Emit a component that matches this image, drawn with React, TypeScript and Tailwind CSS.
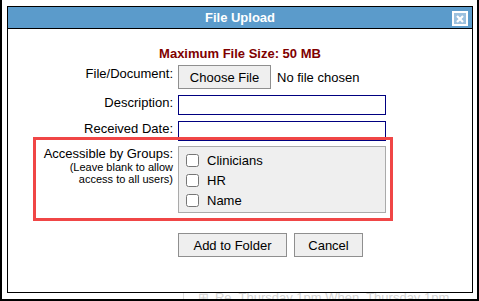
import React from "react";

const font = { fontFamily: '"Liberation Sans", Arial, sans-serif' };

const groups = ["Clinicians", "HR", "Name"];

const App = (): React.JSX.Element => {
  return (
    <div
      className="relative w-[479px] h-[301px] bg-white border-l-2 border-r-2 border-b-2 border-black pl-[5px] pt-[6px] flex flex-col overflow-hidden"
      style={font}
    >
      {/* dialog */}
      <div className="w-[466px] h-[287px] shrink-0 border border-black bg-white flex flex-col">
        <div className="relative h-[22px] shrink-0 bg-[#5b9bcb] border-b border-black flex items-center justify-center">
          <span className="text-white font-bold text-[13px] leading-[15px]">File Upload</span>
          <div className="absolute top-[4px] right-[4px] w-[16px] h-[15px] border-2 border-white bg-[#9cc1df] flex items-center justify-center">
            <svg width="8" height="8" viewBox="0 0 8 8">
              <path d="M1 1L7 7M7 1L1 7" stroke="#fff" strokeWidth="2.2" />
            </svg>
          </div>
        </div>

        <div className="flex flex-col pt-[17px] text-[13px] leading-[15px] text-black">
          <div className="text-center font-bold text-[#800000]">Maximum File Size: 50 MB</div>

          <div className="flex items-start mt-[4px]">
            <div className="w-[165px] text-right pt-[1px]">File/Document:</div>
            <div className="ml-[5px] flex items-center">
              <button className="w-[93px] h-[24px] bg-[#efefef] border border-[#8f8f8f] text-[13px]">
                Choose File
              </button>
              <span className="ml-[6px]">No file chosen</span>
            </div>
          </div>

          <div className="flex items-start mt-[6px]">
            <div className="w-[165px] text-right">Description:</div>
            <input className="ml-[5px] w-[208px] h-[20px] border border-[#000080] outline-none" />
          </div>

          <div className="flex items-start mt-[6px]">
            <div className="w-[165px] text-right">Received Date:</div>
            <input className="ml-[5px] w-[208px] h-[20px] border border-[#000080] outline-none" />
          </div>

          <div className="flex items-start mt-[5px]">
            <div className="w-[165px] text-right">
              <div>Accessible by Groups:</div>
              <div className="text-[11px] leading-[12px]">(Leave blank to allow</div>
              <div className="text-[11px] leading-[12px]">access to all users)</div>
            </div>
            <div className="ml-[5px] w-[208px] h-[67px] border border-[#aaaaaa] bg-[#efefef] pt-[3px] pl-[7px]">
              {groups.map((g) => (
                <label key={g} className="h-[20px] flex items-center">
                  <input type="checkbox" className="m-0 w-[13px] h-[13px]" />
                  <span className="ml-[8px]">{g}</span>
                </label>
              ))}
            </div>
          </div>

          <div className="flex mt-[20px] ml-[170px] gap-[7px]">
            <button className="w-[109px] h-[24px] bg-[#efefef] border border-[#8f8f8f] text-[13px]">
              Add to Folder
            </button>
            <button className="w-[69px] h-[24px] bg-[#efefef] border border-[#8f8f8f] text-[13px]">
              Cancel
            </button>
          </div>
        </div>
      </div>

      {/* page behind the dialog */}
      <div className="h-[6px] overflow-hidden flex items-start pl-[176px] text-[13px] leading-[15px] text-[#d4d4d4]">
        <div className="w-px h-[6px] bg-[#dddddd]" />
        <span className="ml-[14px] -mt-[3px]">⊞</span>
        <span className="ml-[6px] -mt-[3px]">Re. Thursday 1pm When. Thursday 1pm Contact</span>
      </div>

      {/* annotation */}
      <div className="absolute left-[31px] top-[137px] w-[360px] h-[84px] border-[3px] border-[#f04646] pointer-events-none" />
    </div>
  );
};

export default App;
